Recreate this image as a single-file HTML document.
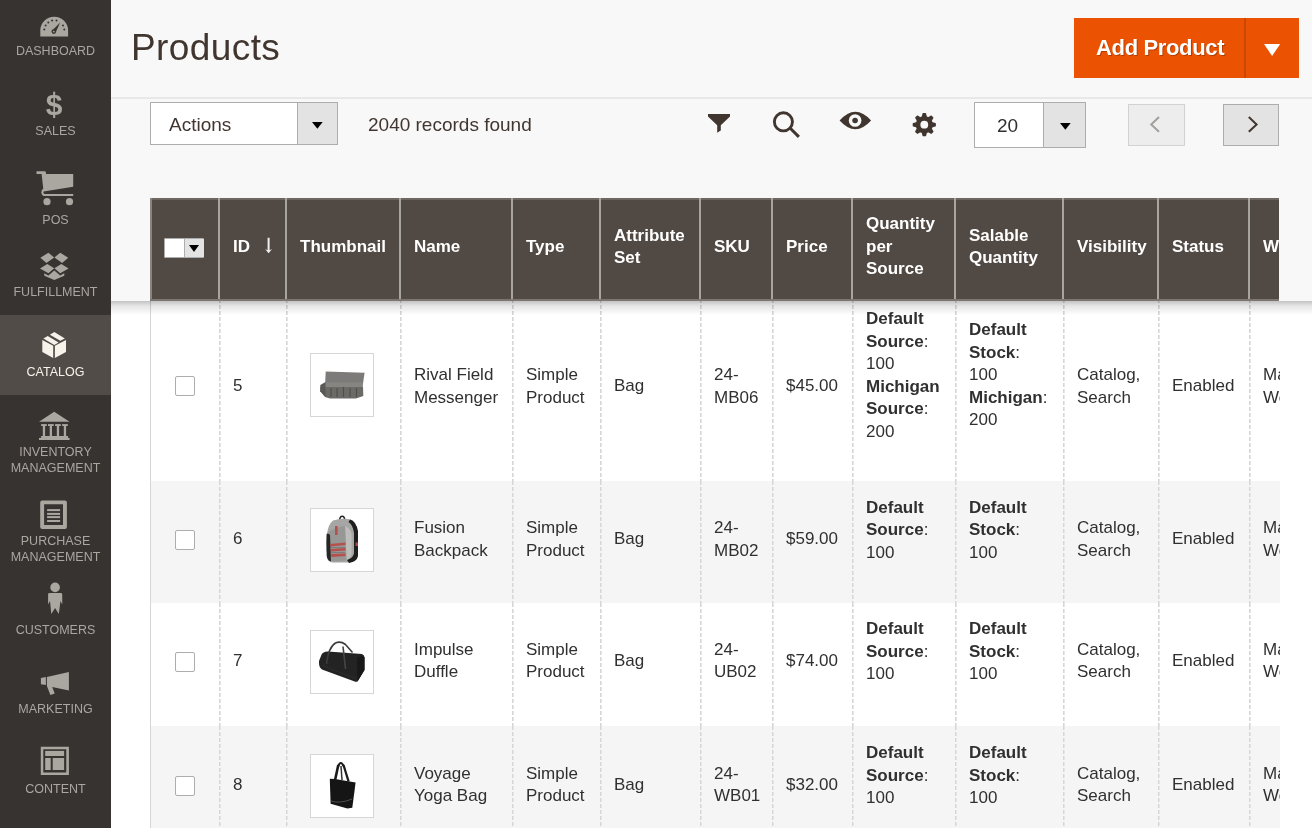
<!DOCTYPE html>
<html><head><meta charset="utf-8"><title>Products</title>
<style>
*{box-sizing:border-box}
html,body{margin:0;padding:0}
body{width:1312px;height:828px;overflow:hidden;position:relative;background:#f8f8f8;will-change:transform;font-family:"Liberation Sans",sans-serif;color:#303030}
.abs{position:absolute}
#side{position:absolute;left:0;top:0;width:111px;height:828px;background:#373330}
#side .act{position:absolute;left:0;top:315px;width:111px;height:80px;background:#514c48}
#side .lbl{position:absolute;left:0;width:111px;text-align:center;font-size:12.5px;line-height:14px;color:#aaa6a0;white-space:nowrap}
#side .lbl.on{color:#f7f3eb}
#side svg{position:absolute}
.hline{position:absolute;left:111px;top:97px;width:1201px;height:2px;background:#e8e8e8}

.btn-add{position:absolute;left:1074px;top:18px;width:225px;height:60px;background:#eb5202}
.btn-add .t{position:absolute;left:22px;top:0;line-height:60px;font-size:22px;font-weight:bold;color:#fff;letter-spacing:-0.35px;text-shadow:1px 1px 0 rgba(0,0,0,.25)}
.btn-add .sp{position:absolute;left:170px;top:0;width:2px;height:60px;background:#c94800}
.sel{position:absolute;background:#fff;border:1px solid #adadad}
.sel .b{position:absolute;top:0;right:0;bottom:0;background:#e3e3e3;border-left:1px solid #adadad}
.tb{position:absolute;font-size:19px;line-height:22px;color:#41362f;white-space:nowrap}
.pg{position:absolute;top:104px;width:57px;height:42px;border:1px solid #adadad;background:#e3e3e3}

#pagebg{position:absolute;left:111px;top:301px;width:1201px;height:527px;background:#fff}
#body{position:absolute;left:150px;top:0;width:1130px;height:828px;overflow:hidden}
.row{position:absolute;left:0;width:1130px}
.c{position:absolute;top:0;height:100%;display:flex;align-items:center;padding:0 0 7px 14px;font-size:17px;line-height:22.5px;color:#303030;white-space:nowrap;background-image:linear-gradient(#d6d6d6 0 4px,transparent 4px),linear-gradient(#e6e6e6 0 4px,transparent 4px);background-size:1px 6px,2px 6px;background-repeat:repeat-y;background-position:0 0}
.c:first-child{background:none;border-left:1px solid #d6d6d6}
.c b{font-weight:bold}
.ml{margin-bottom:16px}
.cb{display:block;position:relative;width:20px;height:20px;border:1px solid #adadad;border-radius:2px;background:#fff;margin-left:10px;margin-top:1px}
.th{display:block;width:64px;height:64px;border:1px solid #d6d6d6;background:#fff;margin-left:10px;position:relative}.th svg{filter:blur(0.35px)}
#sticky{position:absolute;left:111px;top:0;width:1201px;height:301px;background:#f8f8f8}
#shadow{position:absolute;left:111px;top:301px;width:1201px;height:14px;background:linear-gradient(rgba(0,0,0,.24),rgba(0,0,0,.1) 35%,rgba(0,0,0,0))}
#head{position:absolute;left:150px;top:198px;width:1129px;height:103px;background:#514943;overflow:hidden;border-top:0;background-image:linear-gradient(#6e6660 0 2px,transparent 2px 101px,#7d7670 101px);}
.hc{position:absolute;top:0;height:101px;display:flex;align-items:center;padding:0 0 3px 13px;border-left:2px solid #a8a4a0;font-size:17px;line-height:22.5px;font-weight:bold;color:#fff;white-space:nowrap}
.hc:first-child{border-left-color:#8a8480;left:0!important}
.ms{display:block;position:relative;top:1px;width:40px;height:20px;border:1px solid #adadad;border-radius:1px;background:#fff;margin-left:-1px}
.msd{position:absolute;left:19px;top:0;width:20px;height:18px;background:#e3e3e3;border-left:1px solid #adadad}
.msd:after{content:"";position:absolute;left:4px;top:6px;border-left:5.5px solid transparent;border-right:5.5px solid transparent;border-top:7px solid #000}
.arr{display:inline-block;width:10px;margin-left:14px;font-weight:normal}
</style></head>
<body>
<div id="side">
  <div class="act"></div>
<svg width="111" height="828" viewBox="0 0 111 828" style="left:0;top:0">
<g fill="#aaa6a0">
 <path d="M40.3 36.6V30.5A13.9 13.8 0 0 1 68.1 30.5V36.6Z"/>
 <text x="54.2" y="114.9" text-anchor="middle" font-family="Liberation Sans" font-weight="bold" font-size="30">$</text><rect x="53.2" y="91.7" width="2" height="3" /><rect x="53.2" y="115" width="2" height="3"/>
 <path d="M36.5 171.3H44.6Q45.8 171.3 45.9 172.6L46 174H73.2V186.7L43.6 191.6L41.6 174H36.5Z"/>
 <path d="M43.2 188.6Q41.3 190 41.3 192.4Q41.6 196 45.2 196H73.2V193.9H45.2Q43.4 193.9 43.4 192.4Q43.4 191.2 44.6 190.6Z"/>
 <circle cx="47" cy="201.7" r="3.6"/><circle cx="69.5" cy="201.7" r="3.6"/>
 <path d="M40.4 257.7L48.4 252.7L54.2 257.5L46.4 262.9Z"/>
 <path d="M68.2 257.7L60.2 252.7L54.4 257.5L62.2 262.9Z"/>
 <path d="M40 268.5L47.3 263.9L54.2 268.2L48.4 273.2Z"/>
 <path d="M68.6 268.5L61.3 263.9L54.4 268.2L60.2 273.2Z"/>
 <path d="M44.3 273.2L48.4 275.6L54.3 270.6L60.2 275.6L64.3 273.2V275.8L54.3 280L44.3 275.8Z"/>
 <path d="M39 421.8L54.2 411.7L69.6 421.8Z"/>
 <rect x="41.1" y="424.1" width="5.7" height="1.9"/><rect x="48" y="424.1" width="5.7" height="1.9"/><rect x="55.1" y="424.1" width="5.7" height="1.9"/><rect x="62.1" y="424.1" width="5.7" height="1.9"/>
 <rect x="42.8" y="426" width="2.3" height="10"/><rect x="49.7" y="426" width="2.3" height="10"/><rect x="56.8" y="426" width="2.3" height="10"/><rect x="63.8" y="426" width="2.3" height="10"/>
 <rect x="41.1" y="436" width="26.9" height="2"/><rect x="39" y="437.9" width="30.6" height="2.1"/>
 <path fill-rule="evenodd" d="M42.2 500.6H64.9Q66.9 500.6 66.9 502.6V527Q66.9 529 64.9 529H42.2Q40.2 529 40.2 527V502.6Q40.2 500.6 42.2 500.6ZM44.1 504.3V524.9H63V504.3Z"/>
 <rect x="47.1" y="509.1" width="13" height="2"/><rect x="47.1" y="512.9" width="13" height="2"/><rect x="47.1" y="516.1" width="13" height="2"/><rect x="47.1" y="520" width="13" height="2"/>
 <circle cx="55.1" cy="587.4" r="4.8"/>
 <path d="M49.6 593H60.8Q62.2 593 62.2 594.4L62.3 604.6L60.5 601L58.8 614L55.1 608L51.3 614L50 601L48.1 604.6V594.4Q48.1 593 49.6 593Z"/>
 <path d="M40.9 677.9L45.9 677.1V684.9L40.9 684.3Z"/>
 <path d="M46.9 677.1L68.9 672V690.6L52.2 686.9L54.7 693.5L50.4 695L46.9 686.1Z"/>
 <path fill-rule="evenodd" d="M40.8 746.8H68.9V774.9H40.8ZM43.3 749.3V772.5H66.3V749.3Z"/>
 <rect x="45.2" y="750.9" width="18.9" height="5.1"/><rect x="45.2" y="758" width="5.5" height="12"/><rect x="52.7" y="758" width="11.4" height="12"/>
</g>
<g fill="#373330">
 <circle cx="44.3" cy="29.6" r="1"/><circle cx="45.6" cy="25.4" r="1"/><circle cx="48.3" cy="22.5" r="1"/><circle cx="52.1" cy="20.6" r="1"/><circle cx="56.5" cy="20.6" r="1"/><circle cx="63" cy="25.5" r="1"/><circle cx="64.3" cy="29.6" r="1"/>
 <path d="M52.2 30.4L60.2 22.4L55.6 32.6Z"/><circle cx="53.8" cy="31.6" r="2.3"/>
</g>
<circle cx="53.8" cy="31.6" r="0.9" fill="#aaa6a0"/>
<g fill="#f7f3eb">
 <path d="M42.3 339.9L53.2 345.8V358L42.3 352.1Z"/>
 <path d="M66 339.9L54.9 345.8V358L66 352.1Z"/>
 <path d="M43.4 338.6L47.7 336L58.6 342.5L54.3 345.1Z"/>
 <path d="M49.9 334.7L54.3 332.1L64.9 338.6L60.3 340.8Z"/>
</g>
</svg>
  <div class="lbl" style="top:44px">DASHBOARD</div>
  <div class="lbl" style="top:124px">SALES</div>
  <div class="lbl" style="top:213px">POS</div>
  <div class="lbl" style="top:285px">FULFILLMENT</div>
  <div class="lbl on" style="top:365px">CATALOG</div>
  <div class="lbl" style="top:444px;line-height:16px">INVENTORY<br>MANAGEMENT</div>
  <div class="lbl" style="top:533px;line-height:16px">PURCHASE<br>MANAGEMENT</div>
  <div class="lbl" style="top:623px">CUSTOMERS</div>
  <div class="lbl" style="top:702px">MARKETING</div>
  <div class="lbl" style="top:782px">CONTENT</div>
</div>
<div id="pagebg"></div>
<div id="body">
<div class="row" style="top:299px;height:182px;background:#fff">
<div class="c" style="left:0px;width:69px;padding-bottom:7px"><div><span class="cb" style="top:-1px"></span></div></div>
<div class="c" style="left:69px;width:67px;padding-bottom:7px"><div>5</div></div>
<div class="c" style="left:136px;width:114px;padding-bottom:7px"><div><span class="th" style="top:-2px"><svg width="62" height="62" viewBox="311 353 62 62"><path d="M325.7 370.5L364.6 371.8L362.5 386H325Z" fill="#7c7b79"/>
<rect x="325" y="381.5" width="37.5" height="4.5" fill="#878581"/>
<path d="M320.3 386H363L363.3 395L356 397.6H330L325 396L320.3 390.2Z" fill="#6c6a67"/>
<path d="M320.3 384L325.5 381V396L320.3 390.2Z" fill="#595856"/>
<g stroke="#4e4d4b" stroke-width="1.1"><path d="M331 387V396"/><path d="M337 387V396"/><path d="M343.5 386V396"/><path d="M350 387V396"/><path d="M356.5 387V396"/></g></svg></span></div></div>
<div class="c" style="left:250px;width:112px;padding-bottom:7px"><div>Rival Field<br>Messenger</div></div>
<div class="c" style="left:362px;width:88px;padding-bottom:7px"><div>Simple<br>Product</div></div>
<div class="c" style="left:450px;width:100px;padding-bottom:7px"><div>Bag</div></div>
<div class="c" style="left:550px;width:72px;padding-bottom:7px"><div>24-<br>MB06</div></div>
<div class="c" style="left:622px;width:80px;padding-bottom:7px"><div>$45.00</div></div>
<div class="c" style="left:702px;width:103px;padding-bottom:7px"><div><div class="ml" style="margin-bottom:22px"><b>Default<br>Source</b>:<br>100<br><b>Michigan<br>Source</b>:<br>200</div></div></div>
<div class="c" style="left:805px;width:108px;padding-bottom:7px"><div><div class="ml" style="margin-bottom:22px"><b>Default<br>Stock</b>:<br>100<br><b>Michigan</b>:<br>200</div></div></div>
<div class="c" style="left:913px;width:95px;padding-bottom:7px"><div>Catalog,<br>Search</div></div>
<div class="c" style="left:1008px;width:91px;padding-bottom:7px"><div>Enabled</div></div>
<div class="c" style="left:1099px;width:151px;padding-bottom:7px"><div>Main<br>Website</div></div>
</div>
<div class="row" style="top:481px;height:122px;background:#f5f5f5">
<div class="c" style="left:0px;width:69px;padding-bottom:5px"><div><span class="cb" style="top:0px"></span></div></div>
<div class="c" style="left:69px;width:67px;padding-bottom:5px"><div>6</div></div>
<div class="c" style="left:136px;width:114px;padding-bottom:5px"><div><span class="th" style="top:0px"><svg width="62" height="62" viewBox="311 508 62 62"><path d="M339.6 519.5Q339.8 515.2 342.2 515.2Q344.6 515.2 344.8 519.5" fill="none" stroke="#262626" stroke-width="1.5"/>
<path d="M327 534Q327.5 524 333 519.5Q343 516.5 352 519Q357 524 357.5 532V555Q356 560 349 561.5H332Q327 560 326.5 555Z" fill="#a6a6a4"/>
<path d="M350 518.5Q356 520 358 530V555Q357 560.5 349 562L347 559Q353.5 557 354 552V532Q353 524 348.5 521Z" fill="#1e1e1e"/>
<path d="M345 525Q350 527 351.5 533V553Q350.5 557 346.5 559Z" fill="#bdbdbb"/>
<path d="M327 532Q336 525.5 345 525L346.5 559Q339 561 332 560Q327.5 559 327 555Z" fill="#979795"/>
<path d="M326.6 533Q326 546 327 556Q328 560 331 560.5L330 534Q328.5 532 326.6 533Z" fill="#262626"/>
<g fill="#b94a46" opacity="0.9"><rect x="335" y="525" width="2.6" height="9"/><path d="M330 543L345.5 541.5V544L330.5 545.5Z"/><path d="M330.5 548L345.5 547V549.5L331 550.5Z"/><path d="M331 553L345.5 552.5V555L331.5 556Z"/><rect x="355.5" y="541.5" width="2.5" height="3.5"/></g>
<g fill="#777"><path d="M331 546.2H345V547H331Z"/><path d="M331 551.2H345V552H331Z"/></g></svg></span></div></div>
<div class="c" style="left:250px;width:112px;padding-bottom:5px"><div>Fusion<br>Backpack</div></div>
<div class="c" style="left:362px;width:88px;padding-bottom:5px"><div>Simple<br>Product</div></div>
<div class="c" style="left:450px;width:100px;padding-bottom:5px"><div>Bag</div></div>
<div class="c" style="left:550px;width:72px;padding-bottom:5px"><div>24-<br>MB02</div></div>
<div class="c" style="left:622px;width:80px;padding-bottom:5px"><div>$59.00</div></div>
<div class="c" style="left:702px;width:103px;padding-bottom:5px"><div><div class="ml" style="margin-bottom:18px"><b>Default<br>Source</b>:<br>100</div></div></div>
<div class="c" style="left:805px;width:108px;padding-bottom:5px"><div><div class="ml" style="margin-bottom:18px"><b>Default<br>Stock</b>:<br>100</div></div></div>
<div class="c" style="left:913px;width:95px;padding-bottom:5px"><div>Catalog,<br>Search</div></div>
<div class="c" style="left:1008px;width:91px;padding-bottom:5px"><div>Enabled</div></div>
<div class="c" style="left:1099px;width:151px;padding-bottom:5px"><div>Main<br>Website</div></div>
</div>
<div class="row" style="top:603px;height:123px;background:#fff">
<div class="c" style="left:0px;width:69px;padding-bottom:7px"><div><span class="cb" style="top:0px"></span></div></div>
<div class="c" style="left:69px;width:67px;padding-bottom:7px"><div>7</div></div>
<div class="c" style="left:136px;width:114px;padding-bottom:7px"><div><span class="th" style="top:1px"><svg width="62" height="62" viewBox="311 630 62 62"><path d="M321 655Q322 650.5 328 650.5L362 653Q365 654 364.5 658V669L357.5 680.5Q356 681.2 354 680.2L322 668.5Q318.6 666.5 319 660Z" fill="#232323"/>
<path d="M326.5 663Q328.5 646 335.5 642Q340.5 639.8 345.5 643.5L352.5 651.5" fill="none" stroke="#3c3c3c" stroke-width="1.6"/>
<path d="M343 645.5L345.5 668" stroke="#464646" stroke-width="1.6"/>
<path d="M357.5 680.5L364.5 669V656Q361 654 357 657Z" fill="#181818"/>
<path d="M322 664Q338 672 356 677" fill="none" stroke="#2e2e2e" stroke-width="0.8"/></svg></span></div></div>
<div class="c" style="left:250px;width:112px;padding-bottom:7px"><div>Impulse<br>Duffle</div></div>
<div class="c" style="left:362px;width:88px;padding-bottom:7px"><div>Simple<br>Product</div></div>
<div class="c" style="left:450px;width:100px;padding-bottom:7px"><div>Bag</div></div>
<div class="c" style="left:550px;width:72px;padding-bottom:7px"><div>24-<br>UB02</div></div>
<div class="c" style="left:622px;width:80px;padding-bottom:7px"><div>$74.00</div></div>
<div class="c" style="left:702px;width:103px;padding-bottom:7px"><div><div class="ml" style="margin-bottom:18px"><b>Default<br>Source</b>:<br>100</div></div></div>
<div class="c" style="left:805px;width:108px;padding-bottom:7px"><div><div class="ml" style="margin-bottom:18px"><b>Default<br>Stock</b>:<br>100</div></div></div>
<div class="c" style="left:913px;width:95px;padding-bottom:7px"><div>Catalog,<br>Search</div></div>
<div class="c" style="left:1008px;width:91px;padding-bottom:7px"><div>Enabled</div></div>
<div class="c" style="left:1099px;width:151px;padding-bottom:7px"><div>Main<br>Website</div></div>
</div>
<div class="row" style="top:726px;height:125px;background:#f5f5f5">
<div class="c" style="left:0px;width:69px;padding-bottom:7px"><div><span class="cb" style="top:0px"></span></div></div>
<div class="c" style="left:69px;width:67px;padding-bottom:7px"><div>8</div></div>
<div class="c" style="left:136px;width:114px;padding-bottom:7px"><div><span class="th" style="top:1px"><svg width="62" height="62" viewBox="311 754 62 62"><path d="M338.3 765Q340.8 759 343.5 765" fill="none" stroke="#1a1a1a" stroke-width="2.2"/>
<path d="M338.3 764L335.2 778.5" stroke="#1a1a1a" stroke-width="2.6"/>
<path d="M343.5 764L348.6 780.5" stroke="#1a1a1a" stroke-width="2.3"/>
<path d="M341 765L342 779" stroke="#333" stroke-width="1.5"/>
<path d="M329.8 777.7L335.1 778.1L355.6 781.4L352.3 806.8L347.4 807.6L330.6 802.7Z" fill="#151515"/>
<path d="M331 800Q340 803 352 798" fill="none" stroke="#555" stroke-width="0.9"/></svg></span></div></div>
<div class="c" style="left:250px;width:112px;padding-bottom:7px"><div>Voyage<br>Yoga Bag</div></div>
<div class="c" style="left:362px;width:88px;padding-bottom:7px"><div>Simple<br>Product</div></div>
<div class="c" style="left:450px;width:100px;padding-bottom:7px"><div>Bag</div></div>
<div class="c" style="left:550px;width:72px;padding-bottom:7px"><div>24-<br>WB01</div></div>
<div class="c" style="left:622px;width:80px;padding-bottom:7px"><div>$32.00</div></div>
<div class="c" style="left:702px;width:103px;padding-bottom:7px"><div><div class="ml" style="margin-bottom:18px"><b>Default<br>Source</b>:<br>100</div></div></div>
<div class="c" style="left:805px;width:108px;padding-bottom:7px"><div><div class="ml" style="margin-bottom:18px"><b>Default<br>Stock</b>:<br>100</div></div></div>
<div class="c" style="left:913px;width:95px;padding-bottom:7px"><div>Catalog,<br>Search</div></div>
<div class="c" style="left:1008px;width:91px;padding-bottom:7px"><div>Enabled</div></div>
<div class="c" style="left:1099px;width:151px;padding-bottom:7px"><div>Main<br>Website</div></div>
</div>
</div>
<div id="sticky"></div>
<div id="shadow"></div>
<div id="head">
<div class="hc" style="left:-1px;width:69px"><div><span class="ms"><span class="msb"></span><span class="msd"></span></span></div></div>
<div class="hc" style="left:68px;width:67px"><div>ID<svg class="abs" style="left:43px;top:38px" width="12" height="18" viewBox="263 236 12 18"><path d="M267.6 237.8H269.6V250.2L272.1 249.1L268.6 253.3L265.1 249.1L267.6 250.2Z" fill="#f2f0ee"/></svg></div></div>
<div class="hc" style="left:135px;width:114px"><div>Thumbnail</div></div>
<div class="hc" style="left:249px;width:112px"><div>Name</div></div>
<div class="hc" style="left:361px;width:88px"><div>Type</div></div>
<div class="hc" style="left:449px;width:100px"><div>Attribute<br>Set</div></div>
<div class="hc" style="left:549px;width:72px"><div>SKU</div></div>
<div class="hc" style="left:621px;width:80px"><div>Price</div></div>
<div class="hc" style="left:701px;width:103px"><div>Quantity<br>per<br>Source</div></div>
<div class="hc" style="left:804px;width:108px"><div>Salable<br>Quantity</div></div>
<div class="hc" style="left:912px;width:95px"><div>Visibility</div></div>
<div class="hc" style="left:1007px;width:91px"><div>Status</div></div>
<div class="hc" style="left:1098px;width:151px"><div>Websites</div></div>
</div>
<div class="abs" style="left:131px;top:25px;font-size:37px;line-height:46px;letter-spacing:0.4px;color:#41362f">Products</div>
<div class="hline"></div>
<div class="btn-add"><div class="t">Add Product</div><div class="sp"></div>
<svg class="abs" style="left:189.5px;top:26px" width="17" height="12"><path d="M0 0H16.2L8.1 11.9Z" fill="#fff"/></svg></div>
<div class="sel" style="left:150px;top:102px;width:188px;height:43px"><div class="b" style="width:40px"><svg class="abs" style="left:14px;top:18.5px" width="11" height="7"><path d="M0 0H10.7L5.35 6.7Z" fill="#000"/></svg></div></div>
<div class="tb" style="left:169px;top:114px">Actions</div>
<div class="tb" style="left:368px;top:114px">2040 records found</div>
<svg class="abs" style="left:700px;top:100px" width="240" height="45" viewBox="700 100 240 45">
 <g fill="#41362f">
 <path d="M708 114H730V116.6L720.8 125.3V130.6L717.2 132.7V125.3L708 116.6Z"/>
 <path d="M839.6 120.5Q855.3 103 871.1 120.5Q855.3 138 839.6 120.5Z"/>
 </g>
 <circle cx="783.4" cy="121.8" r="9.05" fill="none" stroke="#41362f" stroke-width="2.9"/>
 <path d="M790.5 128.5L798.9 136.9" stroke="#41362f" stroke-width="3"/>
 <circle cx="855.1" cy="120.5" r="6.3" fill="#f8f8f8"/><circle cx="855.1" cy="120.5" r="2.8" fill="#41362f"/>
 <g transform="translate(924.3 124.7)" fill="#41362f">
  <circle r="8.6"/>
  <g id="tooth"><path d="M-2.7 -7.5L-1.8 -11.1Q-1.6 -11.6 -1 -11.6H1Q1.6 -11.6 1.8 -11.1L2.7 -7.5Z"/></g>
  <use href="#tooth" transform="rotate(45)"/><use href="#tooth" transform="rotate(90)"/><use href="#tooth" transform="rotate(135)"/><use href="#tooth" transform="rotate(180)"/><use href="#tooth" transform="rotate(225)"/><use href="#tooth" transform="rotate(270)"/><use href="#tooth" transform="rotate(315)"/>
  <circle r="3.9" fill="#f8f8f8"/>
 </g>
</svg>
<div class="sel" style="left:974px;top:102px;width:112px;height:46px"><div class="b" style="width:42px"><svg class="abs" style="left:15.5px;top:20px" width="11" height="7"><path d="M0 0H10.7L5.35 6.7Z" fill="#000"/></svg></div></div>
<div class="tb" style="left:997px;top:115px;color:#303030">20</div>
<div class="pg" style="left:1128px;opacity:.5"></div>
<div class="pg" style="left:1223px;width:56px"></div>
<svg class="abs" style="left:1140px;top:110px" width="150" height="30" viewBox="1140 110 150 30">
 <path d="M1159 117L1151.2 124.4L1159 131.8" fill="none" stroke="#a49f9b" stroke-width="2"/>
 <path d="M1248.8 117L1256.6 124.4L1248.8 131.8" fill="none" stroke="#41362f" stroke-width="2"/>
</svg>

</body></html>
